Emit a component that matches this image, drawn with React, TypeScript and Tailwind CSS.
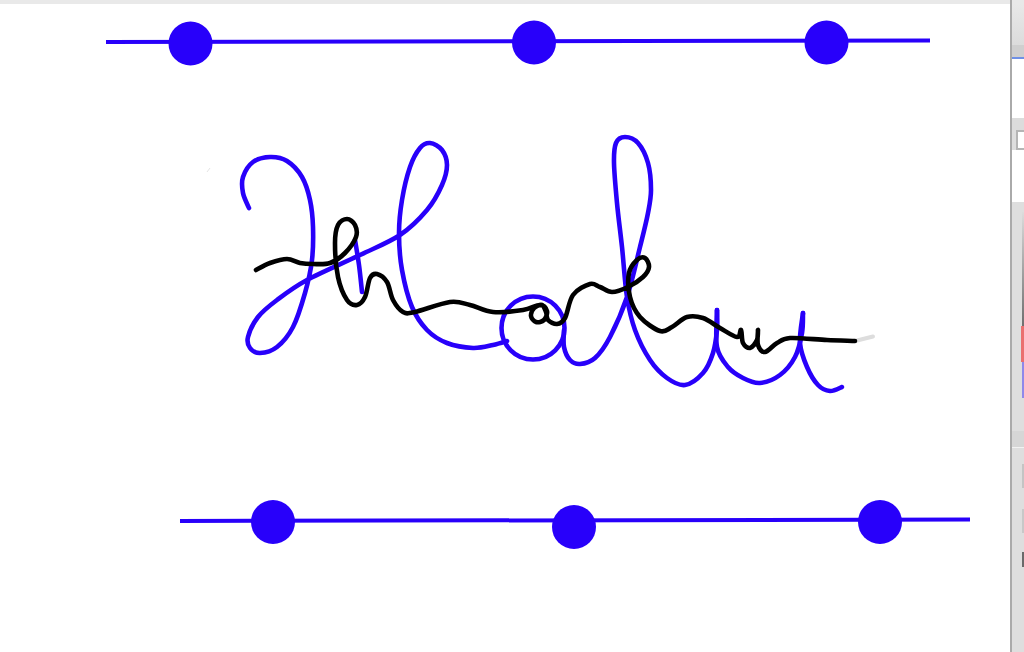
const BLUE = "#2800fa";

type P = [number, number];

// Smooth Catmull-Rom curve through the sampled pen positions
function smooth(points: P[]): string {
  let d = `M${points[0][0]} ${points[0][1]}`;
  for (let i = 0; i < points.length - 1; i++) {
    const p0 = points[i - 1] ?? points[i];
    const p1 = points[i];
    const p2 = points[i + 1];
    const p3 = points[i + 2] ?? p2;
    const c1x = p1[0] + (p2[0] - p0[0]) / 6;
    const c1y = p1[1] + (p2[1] - p0[1]) / 6;
    const c2x = p2[0] - (p3[0] - p1[0]) / 6;
    const c2y = p2[1] - (p3[1] - p1[1]) / 6;
    d += ` C${c1x.toFixed(1)} ${c1y.toFixed(1)} ${c2x.toFixed(1)} ${c2y.toFixed(1)} ${p2[0]} ${p2[1]}`;
  }
  return d;
}

const blueStrokes: P[][] = [
  [
    [249, 208], [243, 193], [243, 177], [253, 162], [270, 157], [287, 161], [302, 177], [310, 200], [313, 227],
    [312, 260], [305, 293], [293, 327], [277, 347], [260, 353], [250, 348], [248, 337], [258, 317], [277, 300],
    [307, 280], [360, 255], [400, 235], [427, 210], [442, 185], [447, 165], [442, 150], [430, 143], [420, 148],
    [410, 167], [402, 200], [399, 233], [402, 270], [412, 307], [427, 330], [447, 343], [473, 348], [493, 345], [507, 341],
  ],
  [[355, 240], [359, 265], [362, 292]],
  [
    [564, 330], [564, 347], [570, 360], [580, 364], [595, 358], [610, 337], [627, 297], [640, 247], [648, 213],
    [651, 190], [648, 163], [638, 143], [625, 137], [616, 143], [614, 163], [617, 203], [622, 247], [627, 297],
    [635, 330], [650, 360], [667, 378], [685, 385], [703, 373], [713, 353], [717, 330], [717, 310],
  ],
  [[717, 310], [717, 347], [728, 367], [743, 378], [760, 383], [780, 375], [795, 357], [802, 333], [803, 313]],
  [[803, 313], [800, 343], [807, 367], [818, 385], [830, 391], [842, 387]],
];

const black: P[] = [
  [256, 270], [270, 263], [287, 259], [300, 263], [313, 264], [330, 263], [345, 253], [356, 237], [355, 225],
  [347, 219], [338, 225], [335, 243], [338, 277], [347, 300], [357, 305], [365, 297], [370, 278], [377, 274],
  [387, 282], [393, 300], [403, 312], [415, 312], [450, 302], [470, 305], [493, 312], [523, 310], [540, 305],
  [547, 311], [544, 320], [536, 322], [531, 316], [534, 308], [542, 305], [546, 312], [548, 320], [557, 324],
  [565, 318], [573, 295], [590, 284], [600, 287], [612, 292], [628, 287], [643, 277], [649, 267], [645, 258],
  [637, 260], [629, 273], [630, 297], [640, 317], [660, 331], [672, 327], [687, 317], [703, 318], [720, 328],
  [737, 337], [741, 330], [743, 343], [750, 348], [757, 340], [758, 330], [758, 345], [765, 352], [777, 343],
  [790, 338], [827, 340], [855, 341],
];

function Sidebar() {
  return (
    <div className="flex w-[14px] flex-col border-l-2 border-[#aaaaaa] bg-[#dedede]">
      <div className="h-[41px] bg-gradient-to-b from-[#e8e8e8] to-[#dcdcdc]" />
      <div className="h-[12px] bg-[#cfcfcf]" />
      <div className="h-[2px] bg-[#6f90e6]" />
      <div className="h-[59px] bg-white" />
      <div className="h-[12px] bg-[#dcdcdc]" />
      <div className="flex h-[20px] bg-[#dedede] pl-[4px]">
        <div className="w-full border-2 border-r-0 border-[#b5b5b5] bg-white" />
      </div>
      <div className="h-[52px] bg-white" />
      <div className="flex flex-1 flex-col bg-[#dedede] pl-[10px] pt-[10px]">
        <div className="h-[114px] bg-gradient-to-b from-[#dcdcdc] to-[#6f6f6f]" />
        <div className="-ml-[1px] h-[36px] bg-[#ea6f6f]" />
        <div className="h-[36px] bg-[#8f88ea]" />
        <div className="-ml-[10px] mt-[33px] h-[16px] bg-[#d6d6d6]" />
        <div className="-ml-[10px] h-[1px] bg-[#f2f2f2]" />
        <div className="mt-[16px] h-[24px] bg-[#c4c4c4]" />
        <div className="mt-[21px] h-[24px] bg-[#c8c8c8]" />
        <div className="mt-[19px] h-[15px] bg-[#6a6a6a]" />
      </div>
    </div>
  );
}

export default function App() {
  return (
    <div className="flex h-[652px] w-[1024px] flex-col overflow-hidden bg-white">
      <div className="flex h-[4px] w-full">
        <div className="flex-1 bg-[#e9e9e9]" />
        <div className="w-[14px] border-l-2 border-[#aaaaaa] bg-[#e8e8e8]" />
      </div>
      <div className="flex min-h-0 flex-1">
        <svg className="h-[648px] w-[1010px] shrink-0" viewBox="0 4 1010 648" fill="none">
          <path d="M106 42 L930 40.5" stroke={BLUE} strokeWidth="4" />
          <circle cx="190.5" cy="43.5" r="22" fill={BLUE} />
          <circle cx="534" cy="42.5" r="22" fill={BLUE} />
          <circle cx="826.5" cy="42.5" r="22" fill={BLUE} />

          <path d="M180 521 L970 519.5" stroke={BLUE} strokeWidth="4" />
          <circle cx="273" cy="522" r="22" fill={BLUE} />
          <circle cx="574" cy="527" r="22" fill={BLUE} />
          <circle cx="880" cy="522" r="22" fill={BLUE} />

          <g stroke={BLUE} strokeWidth="4.6" strokeLinecap="round" strokeLinejoin="round">
            {blueStrokes.map((s, i) => (
              <path key={i} d={smooth(s)} />
            ))}
            <circle cx="533" cy="328" r="31.5" />
          </g>
          <path d="M857 340.5 L873 336.5" stroke="#dddddd" strokeWidth="4" strokeLinecap="round" />
          <path d="M207 172 L210 168" stroke="#e4e4e4" strokeWidth="1" />
          <path d={smooth(black)} stroke="#000000" strokeWidth="4.6" strokeLinecap="round" strokeLinejoin="round" />
        </svg>
        <Sidebar />
      </div>
    </div>
  );
}
